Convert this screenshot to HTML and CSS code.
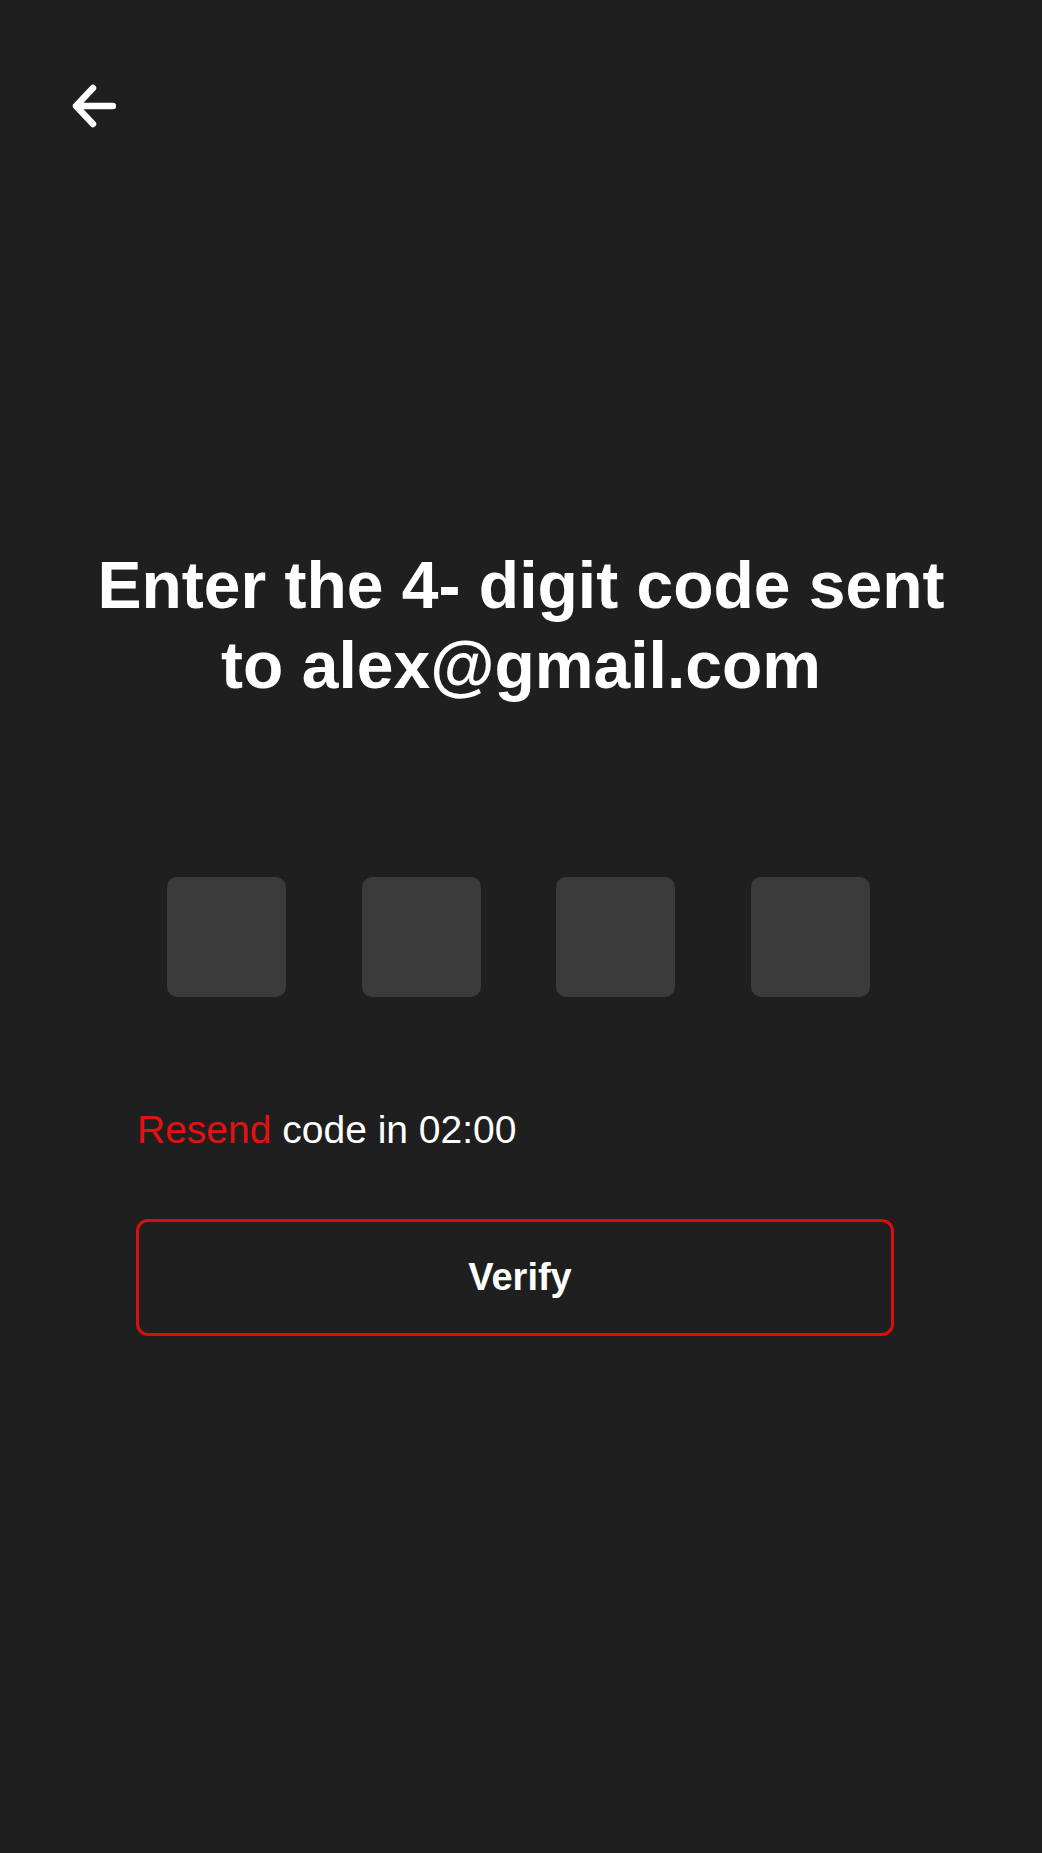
FILE: index.html
```html
<!DOCTYPE html>
<html lang="en">
<head>
<meta charset="utf-8">
<title>Verify code</title>
<link rel="stylesheet" href="styles.css">
</head>
<body>
<div class="screen">
  <header class="top">
    <button class="back" aria-label="Back">
      <svg width="50" height="50" viewBox="0 0 50 50" fill="none" stroke="#ffffff" stroke-width="6.5" stroke-linecap="round" stroke-linejoin="round">
        <path d="M47 26H11"/>
        <path d="M27 8L10 26L27 44"/>
      </svg>
    </button>
  </header>
  <h1 class="title">Enter the 4- digit code sent<br>to alex@gmail.com</h1>
  <div class="content">
    <div class="codes">
      <div class="code-box"></div>
      <div class="code-box"></div>
      <div class="code-box"></div>
      <div class="code-box"></div>
    </div>
    <p class="resend"><span class="resend-link">Resend</span> code in 02:00</p>
    <button class="verify">Verify</button>
  </div>
</div>
</body>
</html>
```

FILE: styles.css
```css
html, body {
  margin: 0;
  padding: 0;
  background: #1f1f1f;
}

.screen {
  width: 1042px;
  height: 1853px;
  background: #1f1f1f;
  font-family: "Liberation Sans", Arial, sans-serif;
  color: #ffffff;
  display: flex;
  flex-direction: column;
}

.top {
  padding: 80px 0 0 66px;
  height: 50px;
}

.back {
  display: block;
  width: 50px;
  height: 50px;
  padding: 0;
  border: 0;
  background: none;
  cursor: pointer;
}

.back svg {
  display: block;
}

.title {
  margin: 415px 0 0 0;
  font-size: 66px;
  line-height: 80px;
  font-weight: 700;
  text-align: center;
}

.content {
  margin-left: 136px;
  width: 758px;
  display: flex;
  flex-direction: column;
}

.codes {
  margin-top: 172px;
  margin-left: 31px;
  display: flex;
  gap: 75.5px;
}

.code-box {
  width: 119px;
  height: 120px;
  background: #3b3b3b;
  border-radius: 10px;
}

.resend {
  margin: 111px 0 0 1px;
  font-size: 39px;
  line-height: 44px;
  color: #ffffff;
}

.resend-link {
  color: #e21212;
}

.verify {
  margin-top: 67px;
  width: 758px;
  height: 117px;
  box-sizing: border-box;
  border: 3px solid #d80f0f;
  border-radius: 12px;
  background: transparent;
  color: #ffffff;
  font-family: "Liberation Sans", Arial, sans-serif;
  font-size: 38px;
  font-weight: 700;
  display: flex;
  align-items: center;
  justify-content: center;
  padding: 0 0 0 10px;
  cursor: pointer;
}
```
